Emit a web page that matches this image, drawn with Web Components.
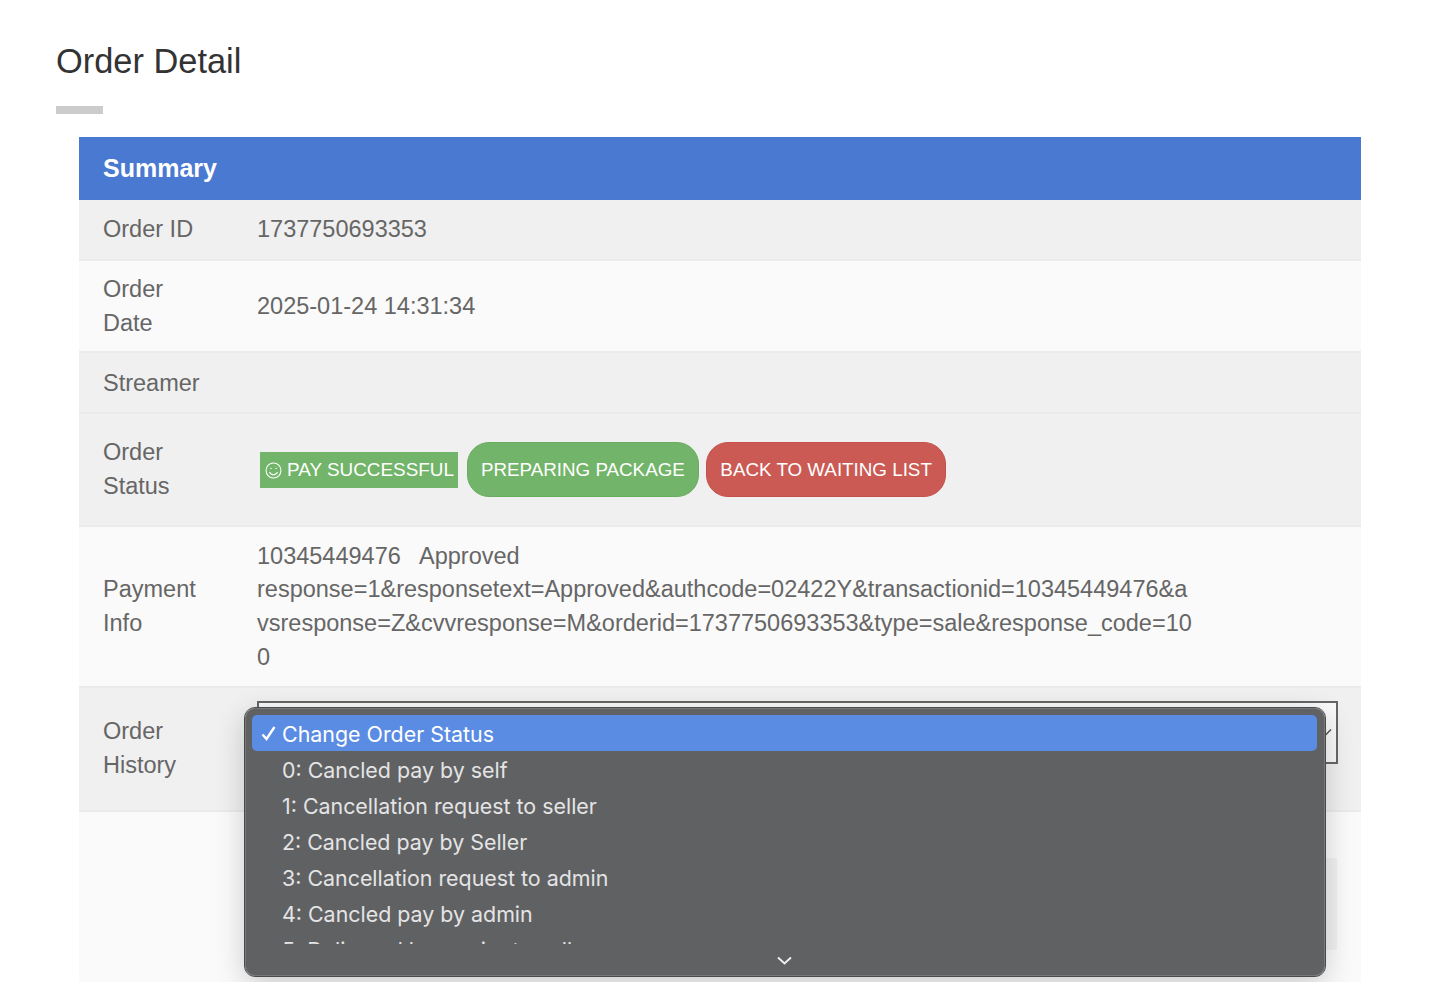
<!DOCTYPE html>
<html>
<head>
<meta charset="utf-8">
<style>
  html, body { margin: 0; height: 100%; background: #fff; overflow: hidden; }
  body { font-family: "Liberation Sans", Arial, sans-serif; }
</style>
</head>
<body>
<order-page>
  <info-table heading="Summary">
    <info-row label="Order ID" class="odd" style="--h:61px;--pt:0px">1737750693353</info-row>
    <info-row label="Order Date" style="--h:92px">2025-01-24 14:31:34</info-row>
    <info-row label="Streamer" class="odd" style="--h:61px"></info-row>
    <info-row label="Order Status" class="odd" style="--h:113px;--pt:1px">
      <status-tag>PAY SUCCESSFUL</status-tag>
      <pill-button>PREPARING PACKAGE</pill-button>
      <pill-button kind="danger">BACK TO WAITING LIST</pill-button>
    </info-row>
    <info-row label="Payment Info" style="--h:161px;--pt:1.4px"><div style="width:940px;word-break:break-all">10345449476 &nbsp; Approved<br>response=1&amp;responsetext=Approved&amp;authcode=02422Y&amp;transactionid=10345449476&amp;avsresponse=Z&amp;cvvresponse=M&amp;orderid=1737750693353&amp;type=sale&amp;response_code=100</div></info-row>
    <info-row label="Order History" class="odd" style="--h:124px;--pt:0px"><fake-select></fake-select></info-row>
    <history-area></history-area>
  </info-table>
  <select-menu></select-menu>
</order-page>
<script>
class OrderPage extends HTMLElement {
  constructor() {
    super();
    this.attachShadow({ mode: 'open' });
    this.shadowRoot.innerHTML = `
      <style>
        :host { display: block; position: relative; height: 982px; overflow: hidden; box-sizing: border-box; padding: 42px 69px 0 56px; }
        h1 { margin: 0; font-size: 34.4px; line-height: 38px; font-weight: 400; color: #333; }
        .rule { width: 47px; height: 8px; background: #ccc; margin: 26px 0 23px; }
        .body { margin-left: 23px; }
      </style>
      <h1>Order Detail</h1>
      <div class="rule"></div>
      <div class="body"><slot></slot></div>
    `;
  }
}

class InfoTable extends HTMLElement {
  constructor() {
    super();
    this.attachShadow({ mode: 'open' });
  }

  connectedCallback() {
    this.shadowRoot.innerHTML = `
      <style>
        :host { display: block; }
        .head { background: #4a79d1; color: #fff; height: 63px; line-height: 62px; padding-left: 24px; font-size: 25px; font-weight: 700; }
      </style>
      <div class="head">${this.getAttribute('heading')}</div>
      <slot></slot>
    `;
  }
}

class InfoRow extends HTMLElement {
  constructor() {
    super();
    this.attachShadow({ mode: 'open' });
  }

  connectedCallback() {
    this.shadowRoot.innerHTML = `
      <style>
        :host { display: grid; grid-template-columns: 154px 1fr; align-items: center; box-sizing: border-box; height: var(--h); padding: var(--pt, 2px) 0 0 24px; font-size: 23.5px; line-height: 33.7px; color: #666; background: #fafafa; border-bottom: 2px solid #ebebeb; }
        :host(.odd) { background: #f0f0f0; }
        .label { width: 100px; }
      </style>
      <div class="label">${this.getAttribute('label')}</div>
      <div><slot></slot></div>
    `;
  }
}

class StatusTag extends HTMLElement {
  constructor() {
    super();
    this.attachShadow({ mode: 'open' });
    this.shadowRoot.innerHTML = `
      <style>
        :host { display: inline-flex; align-items: center; gap: 5px; box-sizing: border-box; vertical-align: middle; height: 36px; margin-left: 3px; padding: 0 4px 0 5px; background: #72b469; color: #fff; font-size: 18.9px; }
        svg { width: 17px; height: 17px; }
      </style>
      <svg viewBox="0 0 16 16" fill="none" stroke="#fff" stroke-width="1">
        <circle cx="8" cy="8" r="7"/>
        <circle cx="5.6" cy="6" r=".7" fill="#fff" stroke="none"/>
        <circle cx="10.4" cy="6" r=".7" fill="#fff" stroke="none"/>
        <path d="M4.2 9.4c.8 1.8 2.2 2.6 3.8 2.6s3-.8 3.8-2.6"/>
      </svg>
      <slot></slot>
    `;
  }
}

class PillButton extends HTMLElement {
  constructor() {
    super();
    this.attachShadow({ mode: 'open' });
    this.shadowRoot.innerHTML = `
      <style>
        :host { display: inline-flex; align-items: center; box-sizing: border-box; vertical-align: middle; height: 55px; margin: 0 0 2px 2.5px; padding: 2px 13px 0; border-radius: 22px; background: #72b469; border: 1px solid #6aad61; color: #fff; font-size: 18.8px; }
        :host([kind="danger"]) { background: #cb5a54; border-color: #c4514c; margin-left: 1px; }
      </style>
      <slot></slot>
    `;
  }
}

class FakeSelect extends HTMLElement {
  constructor() {
    super();
    this.attachShadow({ mode: 'open' });
    this.shadowRoot.innerHTML = `
      <style>
        :host { display: block; box-sizing: border-box; height: 63px; margin: 0 23px 33px 0; border: 2px solid #666; background: #f9f9f9; position: relative; }
        svg { position: absolute; right: 4px; top: 25px; width: 12px; height: 8px; }
      </style>
      <svg viewBox="0 0 12 8" fill="none" stroke="#555" stroke-width="1.5"><path d="M1 1.5l5 5 5-5"/></svg>
    `;
  }
}

class HistoryArea extends HTMLElement {
  constructor() {
    super();
    this.attachShadow({ mode: 'open' });
    this.shadowRoot.innerHTML = `
      <style>
        :host { display: block; height: 170px; background: #fafafa; padding: 46px 24px 0 178px; box-sizing: border-box; }
        .panel { height: 92px; background: #f1f1f1; }
      </style>
      <div class="panel"></div>
    `;
  }
}

class SelectMenu extends HTMLElement {
  constructor() {
    super();
    this.attachShadow({ mode: 'open' });
    const items = ['0: Cancled pay by self', '1: Cancellation request to seller', '2: Cancled pay by Seller',
      '3: Cancellation request to admin', '4: Cancled pay by admin', '5: Delivered by carrier to seller'];
    this.shadowRoot.innerHTML = `
      <style>
        :host { position: absolute; left: 245px; top: 708px; width: 1080px; height: 268px; box-sizing: border-box; background: #606163; border: 1px solid #77787a; outline: 1px solid #4a4a4c; border-radius: 10px; padding: 6px 7px 0 6px; box-shadow: 0 8px 30px rgba(0,0,0,.2); font-family: Inter, "Liberation Sans", sans-serif; font-size: 21.4px; color: #e4e4e5; }
        .list { height: 229px; overflow: hidden; }
        .item { height: 36px; line-height: 38px; padding-left: 30px; position: relative; border-radius: 5px; white-space: nowrap; }
        .item.on { background: #5b8ce3; color: #fff; }
        .item svg { position: absolute; left: 9px; top: 11px; width: 15px; height: 15px; }
        .more { position: absolute; left: 531px; bottom: 10px; width: 15px; height: 9px; }
      </style>
      <div class="list">
        <div class="item on"><svg viewBox="0 0 15 15" fill="none" stroke="#fff" stroke-width="2.4"><path d="M1.5 8.5l4 4.5 8-12"/></svg>Change Order Status</div>
        ${items.map(t => `<div class="item">${t}</div>`).join('')}
      </div>
      <svg class="more" viewBox="0 0 15 9" fill="none" stroke="#eee" stroke-width="2"><path d="M1 1.5l6.5 6 6.5-6"/></svg>
    `;
  }
}

customElements.define('order-page', OrderPage);
customElements.define('info-table', InfoTable);
customElements.define('info-row', InfoRow);
customElements.define('status-tag', StatusTag);
customElements.define('pill-button', PillButton);
customElements.define('fake-select', FakeSelect);
customElements.define('history-area', HistoryArea);
customElements.define('select-menu', SelectMenu);
</script>
</body>
</html>
